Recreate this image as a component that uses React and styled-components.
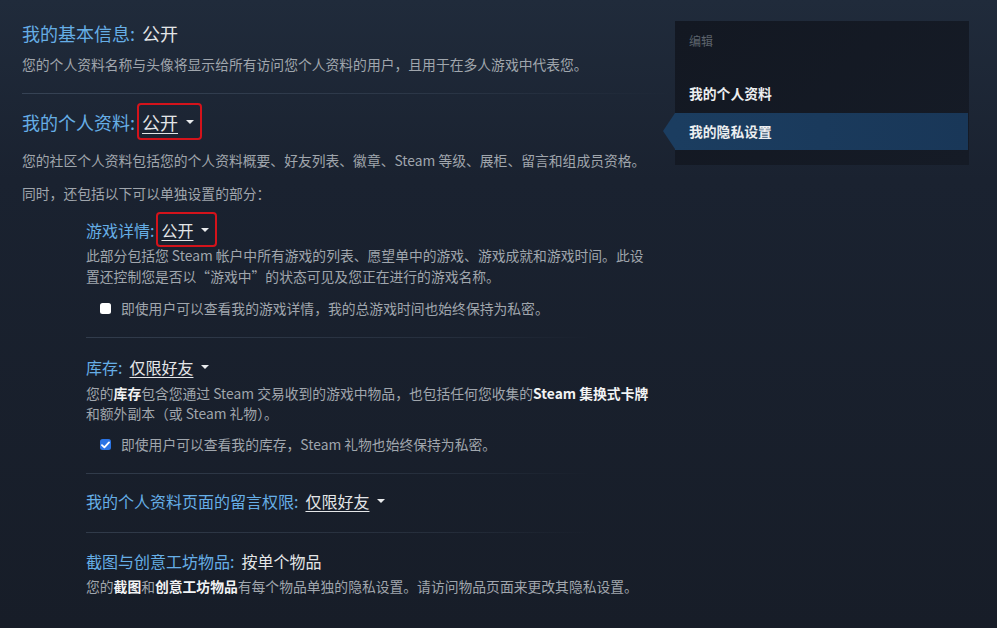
import React from 'react';
import styled, { createGlobalStyle, css } from 'styled-components';

const GlobalStyle = createGlobalStyle`
	html, body {
		margin: 0;
		padding: 0;
	}
	body {
		min-height: 628px;
		background: linear-gradient(180deg, #202b3b 0px, #1a2230 180px, #171d28 628px);
		font-family: "Noto Sans CJK SC", "Noto Sans", sans-serif;
		color: #acb2b8;
	}
`;

function App() {
	return (
		<>
			<GlobalStyle />
			<Page>
				<Main>
					<Heading>
						我的基本信息:<Value>公开</Value>
					</Heading>
					<Desc $gap={9}>
						您的个人资料名称与头像将显示给所有访问您个人资料的用户，且用于在多人游戏中代表您。
					</Desc>
					<Divider />
					<Heading>
						我的个人资料:
						<Dropdown $highlight>公开</Dropdown>
					</Heading>
					<Desc $gap={16}>
						您的社区个人资料包括您的个人资料概要、好友列表、徽章、Steam 等级、展柜、留言和组成员资格。
					</Desc>
					<Desc $gap={12}>同时，还包括以下可以单独设置的部分：</Desc>

					<SubList>
						<SubHeading>
							游戏详情:
							<Dropdown $highlight>公开</Dropdown>
						</SubHeading>
						<Desc $gap={4}>
							此部分包括您 Steam 帐户中所有游戏的列表、愿望单中的游戏、游戏成就和游戏时间。此设
							<br />
							置还控制您是否以“游戏中”的状态可见及您正在进行的游戏名称。
						</Desc>
						<CheckRow>
							<Checkbox />
							即使用户可以查看我的游戏详情，我的总游戏时间也始终保持为私密。
						</CheckRow>
						<SubDivider />

						<SubHeading>
							库存:
							<Dropdown>仅限好友</Dropdown>
						</SubHeading>
						<Desc $gap={5} $lh={20}>
							您的<Strong>库存</Strong>包含您通过 Steam 交易收到的游戏中物品，也包括任何您收集的
							<Strong>Steam 集换式卡牌</Strong>
							<br />
							和额外副本（或 Steam 礼物）。
						</Desc>
						<CheckRow>
							<Checkbox $checked>
								<svg width="9" height="8" viewBox="0 0 9 8">
									<path d="M1 4.2 L3.4 6.4 L8 1.4" fill="none" stroke="#fff" strokeWidth="1.8" strokeLinecap="round" strokeLinejoin="round" />
								</svg>
							</Checkbox>
							即使用户可以查看我的库存，Steam 礼物也始终保持为私密。
						</CheckRow>
						<SubDivider $after={16} />

						<SubHeading>
							我的个人资料页面的留言权限:
							<Dropdown>仅限好友</Dropdown>
						</SubHeading>
						<SubDivider $before={20} $after={17} />

						<SubHeading>
							截图与创意工坊物品:<Value>按单个物品</Value>
						</SubHeading>
						<Desc $gap={4}>
							您的<Strong>截图</Strong>和<Strong>创意工坊物品</Strong>有每个物品单独的隐私设置。请访问物品页面来更改其隐私设置。
						</Desc>
					</SubList>
				</Main>

				<Sidebar>
					<SideLabel>编辑</SideLabel>
					<SideList>
						<SideItem>我的个人资料</SideItem>
						<SideItem $active>我的隐私设置</SideItem>
					</SideList>
				</Sidebar>
			</Page>
		</>
	);
}

const Page = styled.div`
	display: flex;
	align-items: flex-start;
	width: 997px;
`;

const Main = styled.div`
	width: 653px;
	padding: 21px 0 30px 22px;
`;

const headingBase = css`
	margin: 0;
	color: #66aee6;
	font-weight: 400;
	display: flex;
	align-items: center;
	white-space: nowrap;
`;

const Heading = styled.h2`
	${headingBase};
	height: 24px;
	font-size: 18px;
	line-height: 24px;
`;

const SubHeading = styled.h3`
	${headingBase};
	height: 22px;
	font-size: 16px;
	line-height: 22px;
`;

const Value = styled.span`
	color: #e4e6e8;
	margin-left: 7px;
`;

const Dropdown = styled.span`
	position: relative;
	display: inline-flex;
	align-items: center;
	margin-left: 7px;
	color: #e4e6e8;
	text-decoration: underline;
	text-underline-offset: 3px;
	text-decoration-thickness: 1px;
	cursor: pointer;

	&::before {
		content: '';
		order: 2;
		margin-left: 8px;
		border-left: 4px solid transparent;
		border-right: 4px solid transparent;
		border-top: 4px solid #e8eaec;
	}

	${({ $highlight }) =>
		$highlight &&
		css`
			&::after {
				content: '';
				position: absolute;
				top: -7px;
				bottom: -6px;
				left: -5px;
				right: -8px;
				border: 2.5px solid #d4131b;
				border-radius: 4px;
			}
		`}
`;

const Desc = styled.p`
	margin: ${({ $gap }) => $gap || 0}px 0 0;
	font-size: 13.8px;
	line-height: ${({ $lh }) => $lh || 21}px;
	color: #a0a6ad;
	white-space: nowrap;
`;

const Strong = styled.b`
	color: #f2f3f4;
	font-weight: 700;
`;

const Divider = styled.div`
	height: 1px;
	margin: 18px 0 16px;
	background: linear-gradient(90deg, rgba(120, 140, 165, 0.28) 0%, rgba(120, 140, 165, 0.16) 60%, rgba(120, 140, 165, 0) 100%);
`;

const SubList = styled.div`
	margin-top: 15px;
	padding-left: 64px;
`;

const SubDivider = styled.div`
	height: 1px;
	width: 505px;
	margin: ${({ $before }) => $before || 18}px 0 ${({ $after }) => $after || 18}px;
	background: linear-gradient(90deg, rgba(120, 140, 165, 0.26) 0%, rgba(120, 140, 165, 0.14) 70%, rgba(120, 140, 165, 0) 100%);
`;

const CheckRow = styled.label`
	display: flex;
	align-items: center;
	margin-top: 11px;
	padding-left: 14px;
	font-size: 13.8px;
	line-height: 21px;
	color: #a0a6ad;
	white-space: nowrap;
`;

const Checkbox = styled.span`
	display: inline-flex;
	align-items: center;
	justify-content: center;
	width: 11px;
	height: 11px;
	margin-right: 10px;
	border-radius: 2.5px;
	background: ${({ $checked }) => ($checked ? '#2b74e4' : '#ffffff')};
`;

const Sidebar = styled.aside`
	width: 294px;
	height: 144px;
	margin-top: 21px;
	box-sizing: border-box;
	padding-top: 12px;
	background: linear-gradient(135deg, #131822 0%, #151b26 100%);
`;

const SideLabel = styled.div`
	padding-left: 14px;
	font-size: 12px;
	line-height: 16px;
	color: #5c636c;
`;

const SideList = styled.div`
	margin-top: 26px;
	display: flex;
	flex-direction: column;
`;

const SideItem = styled.div`
	position: relative;
	height: 37px;
	display: flex;
	align-items: center;
	padding-left: 14px;
	padding-bottom: 2px;
	box-sizing: border-box;
	font-size: 13.8px;
	font-weight: 700;
	color: #eceef0;

	${({ $active }) =>
		$active &&
		css`
			background: linear-gradient(90deg, #1b3d60 0%, #193758 100%);
			margin-top: 1px;
			margin-right: 1px;

			&::before {
				content: '';
				position: absolute;
				left: -12px;
				top: 0;
				border-top: 18.5px solid transparent;
				border-bottom: 18.5px solid transparent;
				border-right: 12px solid #1b3d60;
			}
		`}
`;

export default App;
